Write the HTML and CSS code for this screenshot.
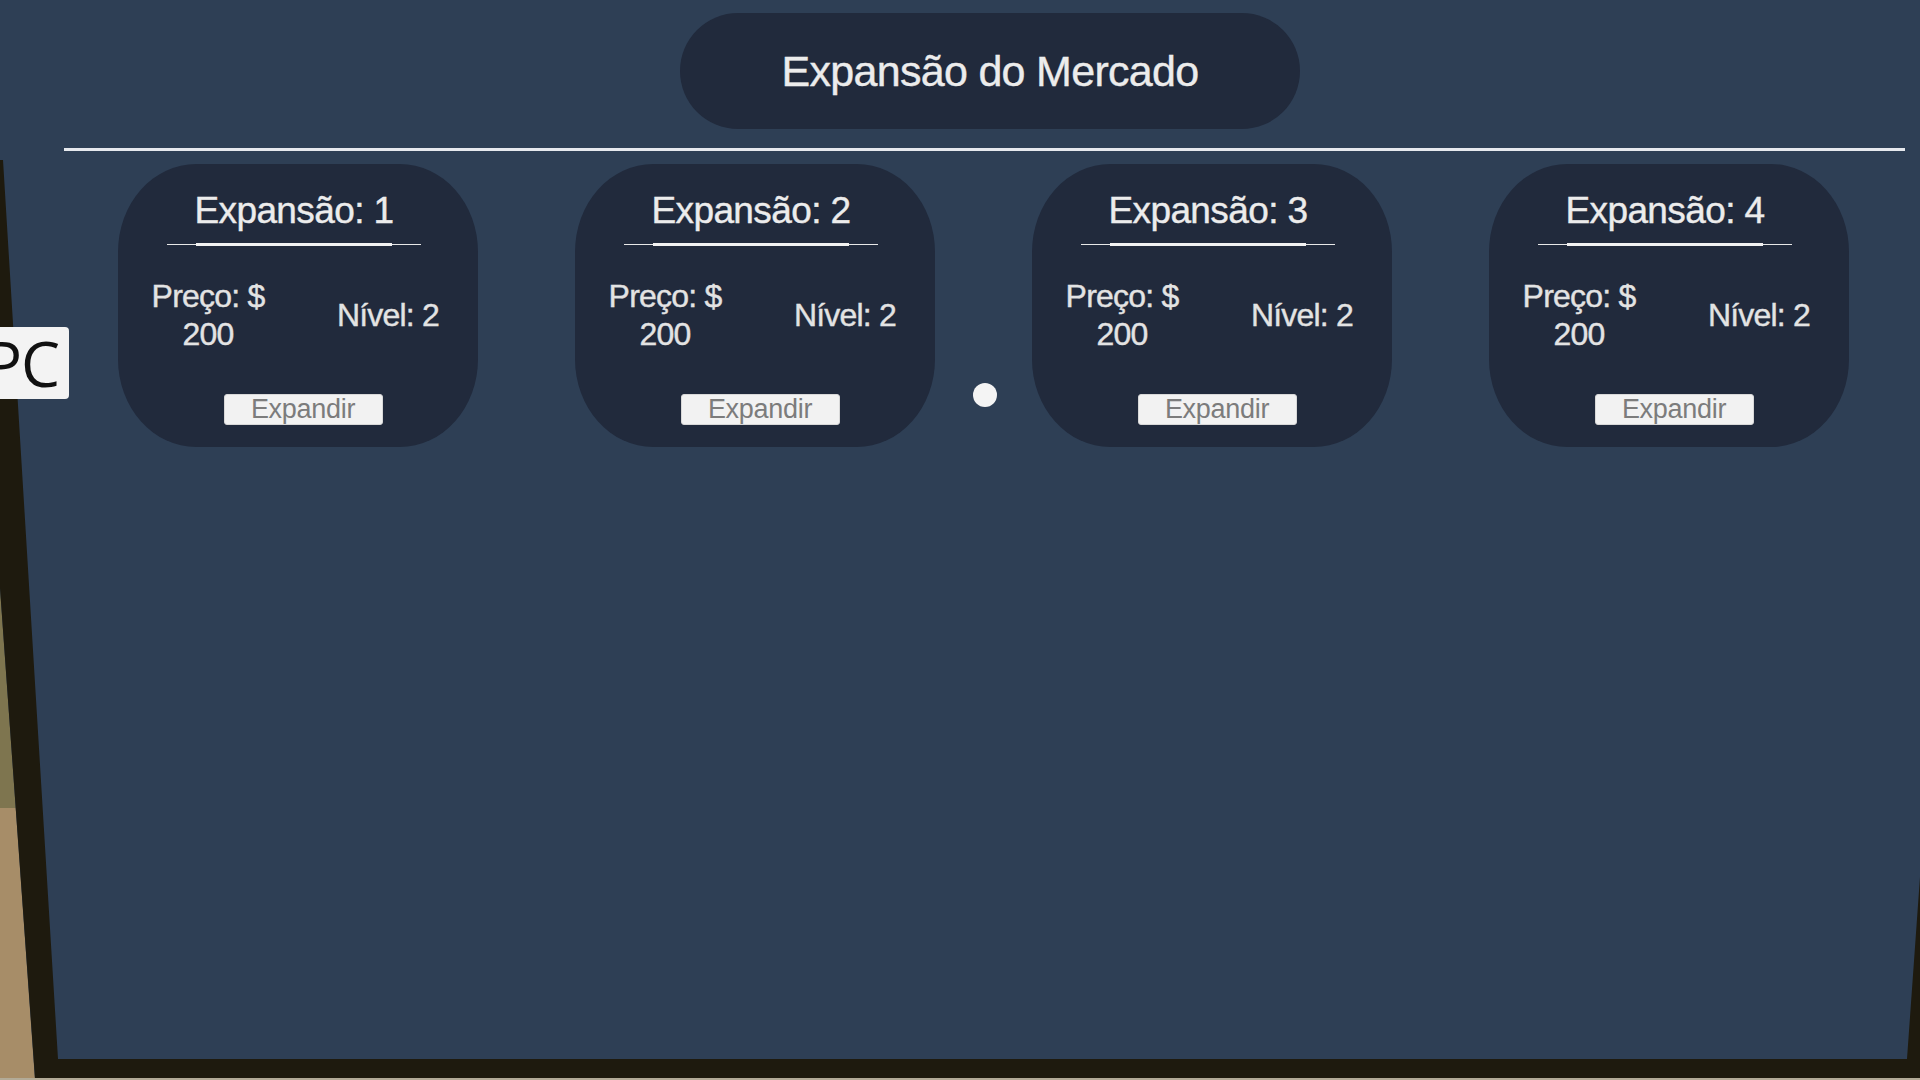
FILE: index.html
```html
<!DOCTYPE html>
<html lang="pt">
<head>
<meta charset="utf-8">
<title>Expansão do Mercado</title>
<link rel="stylesheet" href="styles.css">
</head>
<body>
<svg class="scene" width="1920" height="1080" viewBox="0 0 1920 1080" aria-hidden="true">
  <polygon class="olive" points="0,588 15.7,808 0,808"/>
  <polygon class="tan" points="0,808 15.7,808 35,1080 0,1080"/>
  <polygon class="frame" points="0,160 3,160 58,1059 1907,1059 1920,877 1920,1078 35,1078 0,588"/>
  <rect class="floor" x="0" y="1078" width="1920" height="2"/>
</svg>

<div class="pc-tag"><span>PC</span></div>

<main class="panel">
  <header class="title-pill">Expansão do Mercado</header>
  <div class="divider"></div>
  <section class="cards">
    <article class="card">
      <h2 class="card-title">Expansão: 1</h2>
      <div class="rule"></div>
      <div class="stats">
        <p class="stat">Preço: $<br>200</p>
        <p class="stat">Nível: 2</p>
      </div>
      <button class="expand-btn">Expandir</button>
    </article>
    <article class="card">
      <h2 class="card-title">Expansão: 2</h2>
      <div class="rule"></div>
      <div class="stats">
        <p class="stat">Preço: $<br>200</p>
        <p class="stat">Nível: 2</p>
      </div>
      <button class="expand-btn">Expandir</button>
    </article>
    <article class="card">
      <h2 class="card-title">Expansão: 3</h2>
      <div class="rule"></div>
      <div class="stats">
        <p class="stat">Preço: $<br>200</p>
        <p class="stat">Nível: 2</p>
      </div>
      <button class="expand-btn">Expandir</button>
    </article>
    <article class="card">
      <h2 class="card-title">Expansão: 4</h2>
      <div class="rule"></div>
      <div class="stats">
        <p class="stat">Preço: $<br>200</p>
        <p class="stat">Nível: 2</p>
      </div>
      <button class="expand-btn">Expandir</button>
    </article>
    <span class="cursor-dot"></span>
  </section>
</main>
</body>
</html>
```

FILE: styles.css
```css
html, body {
  margin: 0;
  padding: 0;
}

body {
  width: 1920px;
  height: 1080px;
  overflow: hidden;
  position: relative;
  background: #2e3f55;
  font-family: "Liberation Sans", Arial, sans-serif;
  color: #e6e6e6;
}

.scene {
  position: absolute;
  left: 0;
  top: 0;
  z-index: 0;
}

.scene .frame { fill: #1e1a0e; }
.scene .olive { fill: #7e754f; }
.scene .tan { fill: #a78d68; }
.scene .floor { fill: #b3ab97; }

.pc-tag {
  position: absolute;
  left: 0;
  top: 327px;
  width: 69px;
  height: 72px;
  background: #f3f3f3;
  border-radius: 0 4px 4px 0;
  display: flex;
  justify-content: flex-end;
  align-items: center;
  overflow: hidden;
  padding-right: 10px;
  box-sizing: border-box;
  z-index: 2;
}

.pc-tag span {
  font-family: "Open Sans", "Liberation Sans", sans-serif;
  font-size: 62px;
  line-height: 72px;
  color: #111;
  white-space: nowrap;
  letter-spacing: -1px;
}

.panel {
  position: relative;
  z-index: 1;
  margin-left: 64px;
  width: 1841px;
  display: flex;
  flex-direction: column;
}

.title-pill {
  align-self: flex-start;
  margin: 13px 0 0 616px;
  width: 620px;
  height: 116px;
  border-radius: 58px;
  background: #212a3c;
  display: flex;
  align-items: center;
  justify-content: center;
  font-size: 43px;
  letter-spacing: -0.7px;
  color: #ececec;
  -webkit-text-stroke: 0.4px #ececec;
}

.divider {
  margin-top: 19px;
  height: 3px;
  background: #e6e9ee;
}

.cards {
  position: relative;
  margin-top: 13px;
  padding-left: 54px;
  display: flex;
  gap: 97px;
}

.card {
  width: 360px;
  height: 283px;
  box-sizing: border-box;
  background: #212a3c;
  border-radius: 78px / 88px;
  display: flex;
  flex-direction: column;
  align-items: center;
  padding-top: 26px;
}

.card-title {
  margin: 0 8px 0 0;
  font-size: 37px;
  font-weight: normal;
  line-height: 42px;
  letter-spacing: -0.6px;
  color: #ececec;
  -webkit-text-stroke: 0.4px #ececec;
}

.rule {
  margin: 11px 8px 0 0;
  width: 254px;
  height: 3px;
  background:
    linear-gradient(#f2f2f2, #f2f2f2) center / 196px 3px no-repeat,
    linear-gradient(#e8e8e8, #e8e8e8) center / 100% 1px no-repeat;
}

.stats {
  margin-top: 31px;
  width: 360px;
  display: grid;
  grid-template-columns: 180px 180px;
  align-items: center;
}

.stat {
  margin: 0;
  font-size: 32px;
  line-height: 38px;
  letter-spacing: -0.8px;
  text-align: center;
  color: #e3e3e3;
  -webkit-text-stroke: 0.4px #e3e3e3;
}

.expand-btn {
  margin: 41px 0 0 10px;
  width: 159px;
  height: 31px;
  padding: 0;
  border: 1px solid #d8d8d8;
  border-radius: 3px;
  background: #f2f2f2;
  font-family: "Liberation Sans", Arial, sans-serif;
  font-size: 27px;
  line-height: 29px;
  letter-spacing: -0.3px;
  color: #7c7c7c;
}

.cursor-dot {
  position: absolute;
  left: 909px;
  top: 219px;
  width: 24px;
  height: 24px;
  border-radius: 50%;
  background: #f4f4f4;
}
```
